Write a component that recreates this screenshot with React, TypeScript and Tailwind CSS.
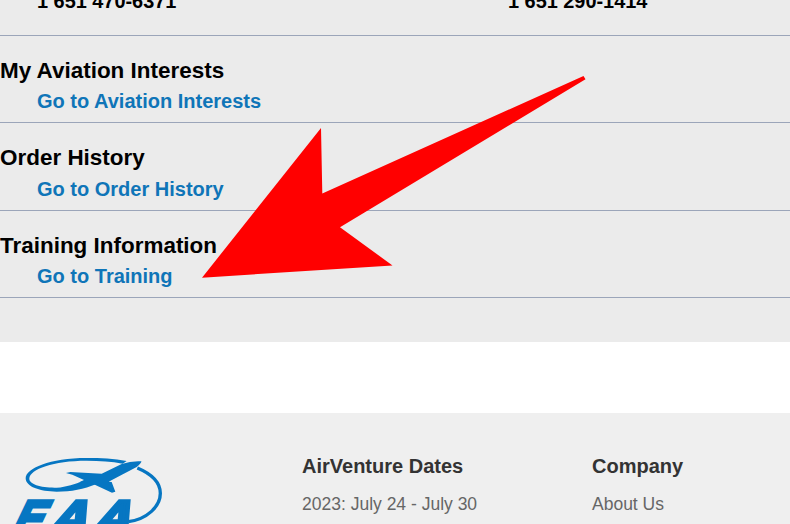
const sections = [
  { title: "My Aviation Interests", link: "Go to Aviation Interests", height: "h-[87px]", gap: "mt-[2px]" },
  { title: "Order History", link: "Go to Order History", height: "h-[88px]", gap: "mt-[3px]" },
  { title: "Training Information", link: "Go to Training", height: "h-[87px]", gap: "mt-[2px]" },
];

function Logo() {
  return (
    <svg width="180" height="84" viewBox="0 0 540 252" fill="#0676c2" className="block shrink-0" aria-label="EAA">
      <path d="M380 63C342 55 302 54 260 54C150 54 77 85 77 115C77 140 120 155 170 155C215 155 250 148 290 132L250 122C225 132 200 141 170 143C125 144 86 134 88 115C90 88 160 62 260 62C300 62 335 64 368 71Z" />
      <path d="M198 99L211 96L305 101L365 72Q395 62 424 64Q426 68 410 81Q378 98 326 125L335 126L346 155L336 158L278 131L238 127L252 120L217 104Z" />
      <path d="M412 84C455 102 481 127 481 160C481 200 440 238 385 245" fill="none" stroke="#0676c2" strokeWidth="10" />
      <g
        fontFamily="'Liberation Sans', Arial, sans-serif"
        fontWeight="700"
        fontSize="148"
        stroke="#0676c2"
        strokeWidth="11"
      >
        <text transform="translate(27 284) skewX(-25.6) scale(.9 1)">E</text>
        <text transform="translate(135 284) skewX(-25.6) scale(1.1 1)">A</text>
        <text transform="translate(264 284) skewX(-25.6) scale(1.1 1)">A</text>
      </g>
    </svg>
  );
}

function Arrow() {
  return (
    <svg className="pointer-events-none absolute top-0 left-0" width="790" height="342" viewBox="0 0 790 342">
      <path d="M202 277.7L321 128L322.3 193.5L583.5 76L585.5 79.3L340 227.2L392.5 265.5Z" fill="#ff0000" />
    </svg>
  );
}

export default function App() {
  return (
    <div className="relative h-[524px] w-[790px] overflow-hidden bg-white font-['Liberation_Sans',Arial,sans-serif]">
      <main className="h-[342px] bg-[#ebebeb] text-black">
        <div className="grid h-9 grid-cols-[471px_1fr] overflow-hidden border-b border-[#9ba5b9] pl-[37px] text-[19.9px] leading-[30px] font-bold">
          <div className="-mt-[14px]">1 651 470-6371</div>
          <div className="-mt-[14px]">1 651 290-1414</div>
        </div>
        {sections.map((s) => (
          <section key={s.title} className={`${s.height} border-b border-[#9ba5b9] pt-[21px] font-bold`}>
            <h2 className="text-[22.46px] leading-[27px]">{s.title}</h2>
            <a className={`${s.gap} block pl-[37px] text-[20px] leading-[30px] text-[#0f75b8]`}>{s.link}</a>
          </section>
        ))}
      </main>
      <footer className="mt-[71px] flex h-[111px] overflow-hidden bg-[#efefef]">
        <div className="w-[302px] shrink-0 pt-[27px]">
          <Logo />
        </div>
        <div className="w-[290px] shrink-0 pt-[38px]">
          <h3 className="text-[20px] leading-[30px] font-bold text-[#333]">AirVenture Dates</h3>
          <p className="mt-[10px] text-[17.5px] leading-[26px] text-[#666]">2023: July 24 - July 30</p>
        </div>
        <div className="pt-[38px]">
          <h3 className="text-[20px] leading-[30px] font-bold text-[#333]">Company</h3>
          <a className="mt-[10px] block text-[17.5px] leading-[26px] text-[#666]">About Us</a>
        </div>
      </footer>
      <Arrow />
    </div>
  );
}
